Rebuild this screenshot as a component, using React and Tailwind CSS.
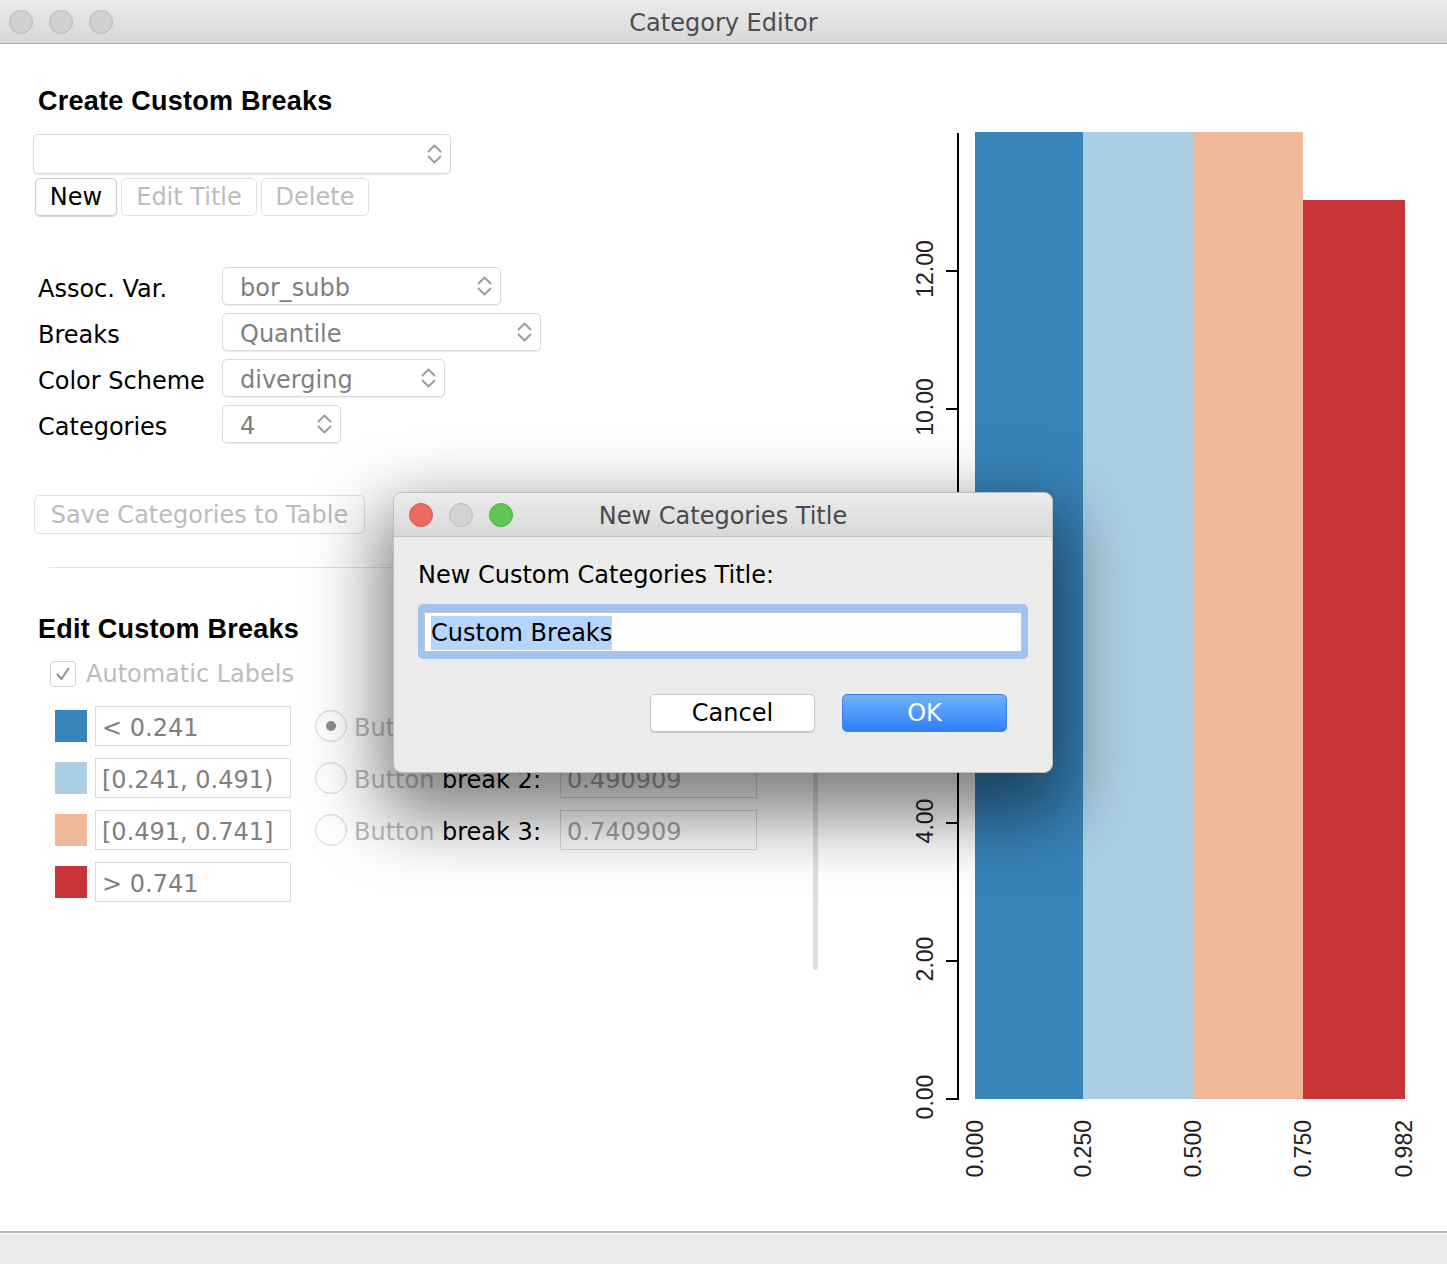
const UI = "font-['DejaVu_Sans',sans-serif]"
const HEAD = "font-['Liberation_Sans',Arial,sans-serif] text-[27px] font-bold leading-[32px] tracking-[0.25px] text-black"

const BREAK_ROWS = [
  { swatch: 'bg-[#3784bb]', label: '< 0.241', n: 1, value: '0.240909', selected: true },
  { swatch: 'bg-[#abd0e3]', label: '[0.241, 0.491)', n: 2, value: '0.490909' },
  { swatch: 'bg-[#efb899]', label: '[0.491, 0.741]', n: 3, value: '0.740909' },
  { swatch: 'bg-[#c83437]', label: '> 0.741' },
]

const BARS = [
  { x: 85, y: 12, w: 108, h: 967, fill: '#3784bb' },
  { x: 193, y: 12, w: 110, h: 967, fill: '#abd0e3' },
  { x: 303, y: 12, w: 110, h: 967, fill: '#efb899' },
  { x: 413, y: 80, w: 102, h: 899, fill: '#c83437' },
]

const Y_TICKS = ['0.00', '2.00', '4.00', '6.00', '8.00', '10.00', '12.00']
const X_TICKS = [
  { x: 92.5, label: '0.000' },
  { x: 200.5, label: '0.250' },
  { x: 310.5, label: '0.500' },
  { x: 420.5, label: '0.750' },
  { x: 522, label: '0.982' },
]

function Chevrons() {
  return (
    <svg width="15" height="24" viewBox="0 0 15 24" fill="none" stroke="#9a9a9a" strokeWidth="1.8" strokeLinecap="round" strokeLinejoin="round">
      <path d="M1.5 9.5 L7.5 3.5 L13.5 9.5" />
      <path d="M1.5 14.5 L7.5 20.5 L13.5 14.5" />
    </svg>
  )
}

function Select({ className = '', value }) {
  return (
    <div className={`flex items-center justify-between rounded-[5px] border border-[#dadada] bg-white pl-[17px] pr-[8px] text-[24px] leading-[28px] text-[#808080] shadow-[0_1px_1px_rgba(0,0,0,0.08)] ${className}`}>
      <span className="pt-[3px]">{value}</span>
      <Chevrons />
    </div>
  )
}

function Btn({ className = '', disabled, children }) {
  return (
    <div
      className={`flex items-center justify-center rounded-[5px] border bg-white text-[24px] leading-[28px] ${
        disabled
          ? 'border-[#e2e2e2] text-[#bcbcbc]'
          : 'border-[#c8c8c8] text-black shadow-[0_1px_1px_rgba(0,0,0,0.18)]'
      } ${className}`}
    >
      {children}
    </div>
  )
}

function Light({ color }) {
  return <div className={`h-[24px] w-[24px] rounded-full border ${color}`} />
}

function Chart() {
  return (
    <svg width="557" height="1100" viewBox="0 0 557 1100" className="mt-[76px] shrink-0">
      {BARS.map((b) => (
        <rect key={b.fill} x={b.x} y={b.y} width={b.w} height={b.h} fill={b.fill} />
      ))}
      <line x1="68" y1="13" x2="68" y2="980" stroke="#000" strokeWidth="2" />
      {Y_TICKS.map((t, i) => {
        const y = 979 - i * 138
        return (
          <g key={t}>
            <line x1="56" y1={y} x2="68" y2={y} stroke="#000" strokeWidth="2" />
            <text
              transform={`translate(43 ${y - 2}) rotate(-90)`}
              textAnchor="middle"
              fontFamily="'Liberation Sans', Arial, sans-serif"
              fontSize="23"
              fill="#222"
            >
              {t}
            </text>
          </g>
        )
      })}
      {X_TICKS.map((t) => (
        <text
          key={t.label}
          transform={`translate(${t.x} 1000) rotate(-90)`}
          textAnchor="end"
          fontFamily="'Liberation Sans', Arial, sans-serif"
          fontSize="23"
          fill="#222"
        >
          {t.label}
        </text>
      ))}
    </svg>
  )
}

function BreakRow({ row }) {
  return (
    <div className="ml-[22px] flex h-[40px] items-center leading-[28px]">
      <div className={`h-[32px] w-[32px] ${row.swatch}`} />
      <div className="ml-[8px] flex h-[40px] w-[196px] items-center border border-[#dcdcdc] bg-white pl-[6px] pt-[3px] text-[24px] text-[#808080]">
        {row.label}
      </div>
      {row.n && (
        <>
          <div className="ml-[24px] flex h-[32px] w-[32px] items-center justify-center rounded-full border border-[#d6d6d6] bg-white shadow-[inset_0_1px_2px_rgba(0,0,0,0.06)]">
            {row.selected && <div className="h-[10px] w-[10px] rounded-full bg-[#8e8e8e]" />}
          </div>
          <div className="ml-[7px] w-[206px] whitespace-nowrap pt-[3px] text-[24px]">
            <span className="text-[#bcbcbc]">Button</span> <span className="text-black">break {row.n}:</span>
          </div>
          <div className="flex h-[40px] w-[197px] items-center border border-[#dadada] bg-white pl-[6px] pt-[3px] text-[24px] text-[#a3a3a3]">
            {row.value}
          </div>
        </>
      )}
    </div>
  )
}

function Dialog() {
  return (
    <div className="absolute left-[393px] top-[492px] h-[281px] w-[660px] overflow-hidden rounded-[9px] border border-[#bdbdbd] bg-[#ececec] shadow-[0_30px_70px_14px_rgba(0,0,0,0.5)]">
      <div className="grid h-[44px] grid-cols-[1fr_auto_1fr] items-center border-b border-[#c6c6c6] bg-gradient-to-b from-[#ececec] to-[#d8d8d8]">
        <div className="flex gap-[16px] pl-[15px]">
          <Light color="border-[#d9554a] bg-[#ee6a5f]" />
          <Light color="border-[#bdbdbd] bg-[#d3d3d3]" />
          <Light color="border-[#4fae44] bg-[#61c554]" />
        </div>
        <div className="pt-[2px] text-[24px] leading-[28px] text-[#4a4a4a]">New Categories Title</div>
        <div />
      </div>
      <div className="px-[24px]">
        <div className="mt-[24px] text-[24px] leading-[28px] text-black">New Custom Categories Title:</div>
        <div className="mt-[15px] h-[55px] w-[610px] rounded-[5px] bg-[#a2c3ee] px-[6px] pb-[7px] pt-[8px]">
          <div className="flex h-[40px] items-center border border-[#bfc5cc] bg-white pl-[6px] pt-[2px]">
            <span className="bg-[#b4d5fe] text-[24px] leading-[34px] text-black">Custom Breaks</span>
          </div>
        </div>
        <div className="mr-[21px] mt-[35px] flex justify-end gap-[27px]">
          <div className="flex h-[38px] w-[165px] items-center justify-center rounded-[5px] border border-[#c6c6c6] bg-white text-[24px] text-black shadow-[0_1px_1px_rgba(0,0,0,0.15)]">
            Cancel
          </div>
          <div className="flex h-[38px] w-[165px] items-center justify-center rounded-[5px] border border-[#3a80ea] bg-gradient-to-b from-[#6fb2fb] to-[#2f7ef6] text-[24px] text-white">
            OK
          </div>
        </div>
      </div>
    </div>
  )
}

export default function App() {
  return (
    <div className={`relative flex h-[1264px] w-[1447px] flex-col overflow-hidden bg-white ${UI}`}>
      <div className="grid h-[44px] shrink-0 grid-cols-[1fr_auto_1fr] items-center border-b border-[#b1b1b1] bg-gradient-to-b from-[#ececec] to-[#d6d6d6]">
        <div className="flex gap-[16px] pl-[9px]">
          <Light color="border-[#b9b9b9] bg-[#d0d0d0]" />
          <Light color="border-[#b9b9b9] bg-[#d0d0d0]" />
          <Light color="border-[#b9b9b9] bg-[#d0d0d0]" />
        </div>
        <div className="pt-[2px] text-[24px] leading-[28px] text-[#4d4d4d]">Category Editor</div>
        <div />
      </div>

      <div className="flex h-[1187px] shrink-0">
        <div className="w-[890px] shrink-0 pl-[33px]">
          <h2 className={`${HEAD} ml-[5px] mt-[41px]`}>Create Custom Breaks</h2>
          <Select className="mt-[17px] h-[40px] w-[418px]" value="" />
          <div className="ml-[2px] mt-[4px] flex gap-[4px]">
            <Btn className="h-[38px] w-[82px]">New</Btn>
            <Btn disabled className="h-[38px] w-[136px]">Edit Title</Btn>
            <Btn disabled className="h-[38px] w-[108px]">Delete</Btn>
          </div>

          <div className="ml-[5px] mt-[51px] flex flex-col gap-[8px] text-[24px] leading-[28px] text-black">
            <div className="flex h-[38px] items-center">
              <span className="w-[184px] pt-[6px]">Assoc. Var.</span>
              <Select className="h-[38px] w-[279px]" value="bor_subb" />
            </div>
            <div className="flex h-[38px] items-center">
              <span className="w-[184px] pt-[6px]">Breaks</span>
              <Select className="h-[38px] w-[319px]" value="Quantile" />
            </div>
            <div className="flex h-[38px] items-center">
              <span className="w-[184px] pt-[6px]">Color Scheme</span>
              <Select className="h-[38px] w-[223px]" value="diverging" />
            </div>
            <div className="flex h-[38px] items-center">
              <span className="w-[184px] pt-[6px]">Categories</span>
              <Select className="h-[38px] w-[119px]" value="4" />
            </div>
          </div>

          <Btn disabled className="ml-[1px] mt-[52px] h-[39px] w-[331px]">Save Categories to Table</Btn>

          <div className="ml-[16px] mt-[33px] h-px w-[760px] bg-[#e4e4e4]" />

          <h2 className={`${HEAD} ml-[5px] mt-[45px]`}>Edit Custom Breaks</h2>

          <div className="ml-[17px] mt-[16px] flex h-[26px] items-center gap-[10px]">
            <div className="flex h-[26px] w-[26px] items-center justify-center rounded-[4px] border border-[#d2d2d2] bg-white">
              <svg width="18" height="18" viewBox="0 0 18 18" fill="none" stroke="#8f8f8f" strokeWidth="2" strokeLinecap="round" strokeLinejoin="round">
                <path d="M3.5 9.5 L7.5 14 L14.5 3.5" />
              </svg>
            </div>
            <span className="text-[24px] leading-[26px] text-[#bcbcbc]">Automatic Labels</span>
          </div>

          <div className="mt-[19px] flex">
            <div className="flex flex-col gap-[12px]">
              {BREAK_ROWS.map((row) => (
                <BreakRow key={row.label} row={row} />
              ))}
            </div>
            <div className="ml-[56px] h-[264px] w-[5px] rounded-full bg-[#dfdfdf]" />
          </div>
        </div>

        <Chart />
      </div>

      <div className="h-[2px] shrink-0 bg-[#b5b5b5]" />
      <div className="h-px shrink-0 bg-white" />
      <div className="flex-1 bg-[#ebebeb]" />

      <Dialog />
    </div>
  )
}
